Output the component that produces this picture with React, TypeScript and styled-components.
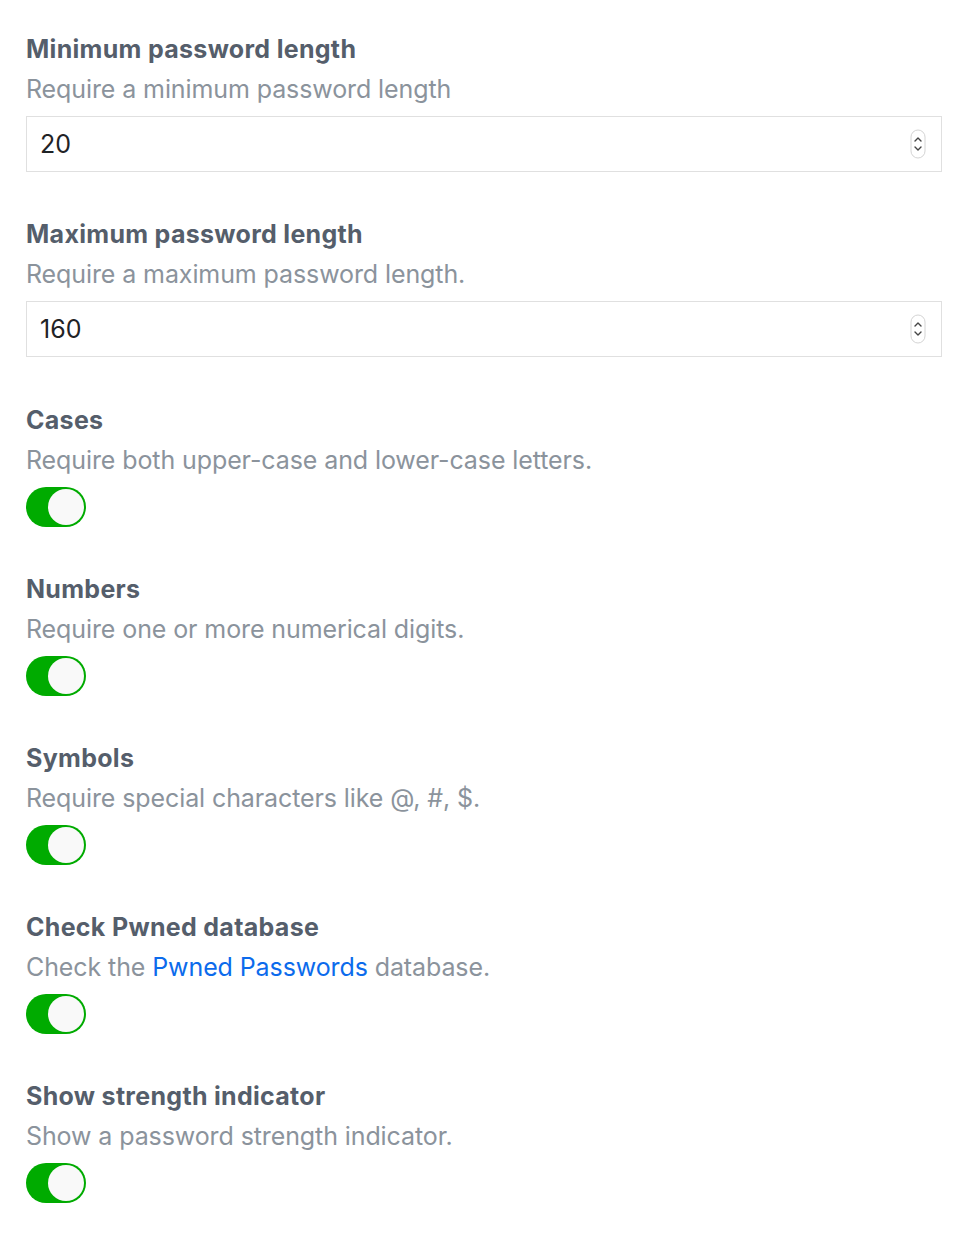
import React, { useState } from "react";
import styled, { createGlobalStyle } from "styled-components";

const Global = createGlobalStyle`
  html, body { margin: 0; padding: 0; background: #ffffff; }
  body { font-family: Inter, "Noto Sans", "Liberation Sans", sans-serif; }
`;

const Page = styled.div`
  padding: 29px 32px 40px 26px;
  display: flex;
  flex-direction: column;
  gap: 42px;
`;

const Section = styled.section<{ $toggle?: boolean }>`
  display: flex;
  flex-direction: column;
  padding-top: ${(p) => (p.$toggle ? "1px" : "0")};
  margin-bottom: ${(p) => (p.$toggle ? "-1px" : "0")};
`;

const Title = styled.div`
  font-size: 25px;
  line-height: 40px;
  font-weight: 700;
  color: #555e6b;
  letter-spacing: 0.3px;
`;

const Desc = styled.div`
  font-size: 25px;
  line-height: 40px;
  color: #8b939c;
  letter-spacing: -0.1px;
`;

const Link = styled.a`
  color: #0c6bec;
  text-decoration: none;
`;

const Field = styled.label`
  margin-top: 7px;
  height: 56px;
  box-sizing: border-box;
  border: 1px solid #e0e0e0;
  display: flex;
  align-items: center;
  padding: 0 15px 0 13px;
  background: #fff;
`;

const NumberInput = styled.input`
  flex: 1;
  border: none;
  outline: none;
  font-family: Inter, "Noto Sans", "Liberation Sans", sans-serif;
  font-size: 25px;
  color: #1f2326;
  padding: 0;
  background: transparent;
  -moz-appearance: textfield;
  &::-webkit-inner-spin-button,
  &::-webkit-outer-spin-button {
    -webkit-appearance: none;
    margin: 0;
  }
`;

const Spinner = styled.svg`
  flex: none;
  width: 16px;
  height: 30px;
`;

const ToggleTrack = styled.button<{ $on: boolean }>`
  margin-top: 7px;
  width: 60px;
  height: 40px;
  box-sizing: border-box;
  border-radius: 20px;
  border: none;
  padding: 2px;
  background: ${(p) => (p.$on ? "#00ab00" : "#d6d6d6")};
  display: flex;
  justify-content: ${(p) => (p.$on ? "flex-end" : "flex-start")};
  align-items: center;
  cursor: pointer;
`;

const Knob = styled.span`
  width: 36px;
  height: 36px;
  border-radius: 50%;
  background: #f9f9f9;
  display: block;
`;

function SpinIcon() {
  return (
    <Spinner viewBox="0 0 16 30">
      <rect x="1" y="1" width="14" height="28" rx="7" fill="#fff" stroke="#d4d4d4" strokeWidth="1" />
      <path d="M5 12 L8 9 L11 12" fill="none" stroke="#444" strokeWidth="1.4" strokeLinecap="round" strokeLinejoin="round" />
      <path d="M5 18 L8 21 L11 18" fill="none" stroke="#444" strokeWidth="1.4" strokeLinecap="round" strokeLinejoin="round" />
    </Spinner>
  );
}

function NumberSetting({ title, desc, value }: { title: string; desc: string; value: number }) {
  const [v, setV] = useState(String(value));
  return (
    <Section>
      <Title>{title}</Title>
      <Desc>{desc}</Desc>
      <Field>
        <NumberInput type="number" value={v} onChange={(e) => setV(e.target.value)} />
        <SpinIcon />
      </Field>
    </Section>
  );
}

function ToggleSetting({ title, desc }: { title: string; desc: React.ReactNode }) {
  const [on, setOn] = useState(true);
  return (
    <Section $toggle>
      <Title>{title}</Title>
      <Desc>{desc}</Desc>
      <div>
        <ToggleTrack $on={on} onClick={() => setOn(!on)} aria-pressed={on}>
          <Knob />
        </ToggleTrack>
      </div>
    </Section>
  );
}

export default function App() {
  return (
    <>
      <Global />
      <Page>
        <NumberSetting title="Minimum password length" desc="Require a minimum password length" value={20} />
        <NumberSetting title="Maximum password length" desc="Require a maximum password length." value={160} />
        <ToggleSetting title="Cases" desc="Require both upper-case and lower-case letters." />
        <ToggleSetting title="Numbers" desc="Require one or more numerical digits." />
        <ToggleSetting title="Symbols" desc="Require special characters like @, #, $." />
        <ToggleSetting
          title="Check Pwned database"
          desc={
            <>
              Check the <Link href="#">Pwned Passwords</Link> database.
            </>
          }
        />
        <ToggleSetting title="Show strength indicator" desc="Show a password strength indicator." />
      </Page>
    </>
  );
}
